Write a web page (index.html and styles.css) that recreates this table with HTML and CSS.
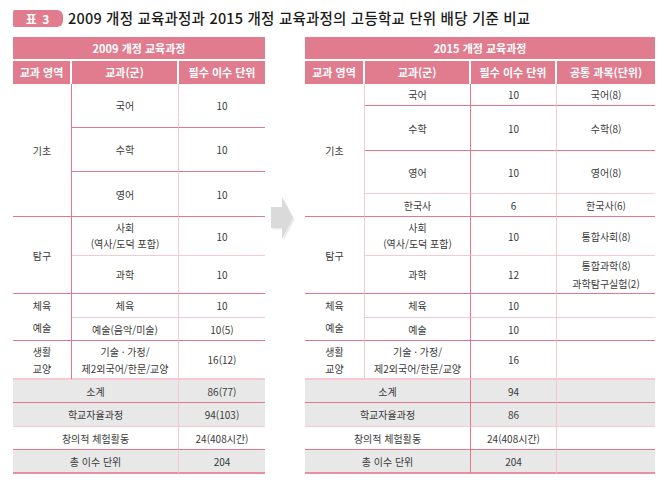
FILE: index.html
```html
<!DOCTYPE html>
<html lang="ko">
<head>
<meta charset="utf-8">
<link rel="stylesheet" href="styles.css">
</head>
<body>
<div class="title">
  <span class="badge">표 3</span>
  <span class="title-text">2009 개정 교육과정과 2015 개정 교육과정의 고등학교 단위 배당 기준 비교</span>
</div>
<div class="wrap">
  <table class="tbl tl">
    <colgroup><col class="lc1"><col class="lc2"><col class="lc3"></colgroup>
    <thead>
      <tr class="h1"><th colspan="3">2009 개정 교육과정</th></tr>
      <tr class="h2"><th class="sep">교과 영역</th><th class="sep">교과(군)</th><th>필수 이수 단위</th></tr>
    </thead>
    <tbody>
      <tr class="r44"><td rowspan="3" class="area vd">기초</td><td class="vl">국어</td><td>10</td></tr>
      <tr class="r44"><td class="vl">수학</td><td>10</td></tr>
      <tr class="r45"><td class="vl">영어</td><td>10</td></tr>
      <tr class="r39"><td rowspan="2" class="area vd">탐구</td><td class="vl lt ml">사회<br>(역사/도덕 포함)</td><td class="lt">10</td></tr>
      <tr class="r38"><td class="vl">과학</td><td>10</td></tr>
      <tr class="r24"><td rowspan="2" class="area vd tall">체육<br>예술</td><td class="vl lt">체육</td><td class="lt">10</td></tr>
      <tr class="r23"><td class="vl">예술(음악/미술)</td><td>10(5)</td></tr>
      <tr class="r39"><td class="area vd mid lt2">생활<br>교양</td><td class="vl mid lt2">기술 · 가정/<br>제2외국어/한문/교양</td><td class="lt2">16(12)</td></tr>
      <tr class="r23 gray"><td colspan="2" class="vl">소계</td><td>86(77)</td></tr>
      <tr class="r24 gray"><td colspan="2" class="vl lt">학교자율과정</td><td class="lt">94(103)</td></tr>
      <tr class="r23"><td colspan="2" class="vl">창의적 체험활동</td><td>24(408시간)</td></tr>
      <tr class="r24 gray last"><td colspan="2" class="vl">총 이수 단위</td><td>204</td></tr>
    </tbody>
  </table>
  <svg class="arrow" width="24" height="44" viewBox="0 0 24 44" aria-hidden="true">
    <polygon points="1,11 12,11 12,1 23,22 12,43 12,32 1,32" fill="#cfcfcf" opacity="0.4" transform="translate(0.6,0.6)"/>
    <polygon points="0,10 11,10 11,0 22,21 11,42 11,31 0,31" fill="#dadada"/>
  </svg>
  <table class="tbl tr">
    <colgroup><col class="rc1"><col class="rc2"><col class="rc3"><col class="rc4"></colgroup>
    <thead>
      <tr class="h1"><th colspan="4">2015 개정 교육과정</th></tr>
      <tr class="h2"><th class="sep">교과 영역</th><th class="sep">교과(군)</th><th class="sep">필수 이수 단위</th><th>공통 과목(단위)</th></tr>
    </thead>
    <tbody>
      <tr class="r22"><td rowspan="4" class="area vl">기초</td><td class="vd">국어</td><td class="vl">10</td><td>국어(8)</td></tr>
      <tr class="r45"><td class="vd">수학</td><td class="vl">10</td><td>수학(8)</td></tr>
      <tr class="r43"><td class="vd lt">영어</td><td class="vl lt">10</td><td class="lt">영어(8)</td></tr>
      <tr class="r23"><td class="vd">한국사</td><td class="vl">6</td><td>한국사(6)</td></tr>
      <tr class="r39"><td rowspan="2" class="area vl">탐구</td><td class="vd lt ml">사회<br>(역사/도덕 포함)</td><td class="vl lt">10</td><td class="lt">통합사회(8)</td></tr>
      <tr class="r38"><td class="vd">과학</td><td class="vl">12</td><td class="ml2">통합과학(8)<br>과학탐구실험(2)</td></tr>
      <tr class="r24"><td rowspan="2" class="area vl tall">체육<br>예술</td><td class="vd lt">체육</td><td class="vl lt">10</td><td class="lt"></td></tr>
      <tr class="r23"><td class="vd">예술</td><td class="vl">10</td><td></td></tr>
      <tr class="r39"><td class="area vl mid lt2">생활<br>교양</td><td class="vd mid lt2">기술 · 가정/<br>제2외국어/한문/교양</td><td class="vl lt2">16</td><td class="lt2"></td></tr>
      <tr class="r23 gray"><td colspan="2" class="vd">소계</td><td class="vl">94</td><td></td></tr>
      <tr class="r24 gray"><td colspan="2" class="vd lt">학교자율과정</td><td class="vl lt">86</td><td class="lt"></td></tr>
      <tr class="r23"><td colspan="2" class="vd">창의적 체험활동</td><td class="vl">24(408시간)</td><td></td></tr>
      <tr class="r24 gray last"><td colspan="2" class="vd">총 이수 단위</td><td class="vl">204</td><td></td></tr>
    </tbody>
  </table>
</div>
</body>
</html>
```
FILE: styles.css
```css
:root {
  --pink: #e17b8e;
  --dk: #e3788d;
  --lt: #f4c9d2;
  --gray: #e8e8e8;
}
* { box-sizing: border-box; }
html, body { margin: 0; padding: 0; background: #fff; }
body {
  width: 672px;
  height: 487px;
  font-family: "Noto Sans CJK KR", "Noto Sans", sans-serif;
  color: #3a3a3a;
  overflow: hidden;
}
.title {
  display: flex;
  align-items: center;
  height: 17px;
  margin: 10px 0 0 13px;
}
.badge {
  display: inline-flex;
  align-items: center;
  justify-content: center;
  width: 50px;
  height: 17px;
  background: var(--pink);
  color: #fff;
  font-size: 12px;
  font-weight: 700;
  border-radius: 2px 6px 6px 2px;
  letter-spacing: 1px;
  line-height: 1;
}
.title-text {
  margin-left: 5px;
  font-size: 14.5px;
  font-weight: 500;
  color: #1a1a1a;
  letter-spacing: 0.2px;
  line-height: 1;
}
.wrap {
  display: flex;
  align-items: flex-start;
  margin: 10px 0 0 13px;
}
.tbl {
  border-collapse: separate;
  border-spacing: 0;
  table-layout: fixed;
  font-size: 10px;
  line-height: 15px;
}
.tl { width: 252px; }
.tr { width: 350px; margin-left: 10px; }
.lc1 { width: 59px; }
.lc2 { width: 107px; }
.lc3 { width: 86px; }
.rc1 { width: 60px; }
.rc2 { width: 106px; }
.rc3 { width: 86px; }
.rc4 { width: 98px; }
.arrow { margin: 160px 0 0 6px; flex: none; }
th {
  background: var(--pink);
  color: #fff;
  font-size: 11px;
  font-weight: 700;
  padding: 0;
  text-align: center;
  white-space: nowrap;
}
.h1 { height: 24px; }
.h1 th { border-bottom: 2px solid #fff; }
.h2 { height: 23px; }
th.sep { border-right: 2px solid #fff; }
td {
  padding: 0;
  text-align: center;
  vertical-align: middle;
  border-bottom: 1px solid var(--dk);
  white-space: nowrap;
}
td.vd { border-right: 1px solid var(--dk); }
td.vl { border-right: 1px solid var(--lt); }
td.lt { border-bottom-color: var(--lt); }
td.lt2 { border-bottom: 2px solid var(--lt); }
td.area { line-height: 15px; }
td.tall { line-height: 22px; }
td.mid { line-height: 17px; }
td.ml { line-height: 16px; }
td.ml2 { line-height: 18px; }
.gray td { background: var(--gray); }
.last td { border-bottom: 2px solid #e8909f; }
.r22 { height: 22px; }
.r23 { height: 23px; }
.r24 { height: 24px; }
.r38 { height: 38px; }
.r39 { height: 39px; }
.r43 { height: 43px; }
.r44 { height: 44px; }
.r45 { height: 45px; }
```
